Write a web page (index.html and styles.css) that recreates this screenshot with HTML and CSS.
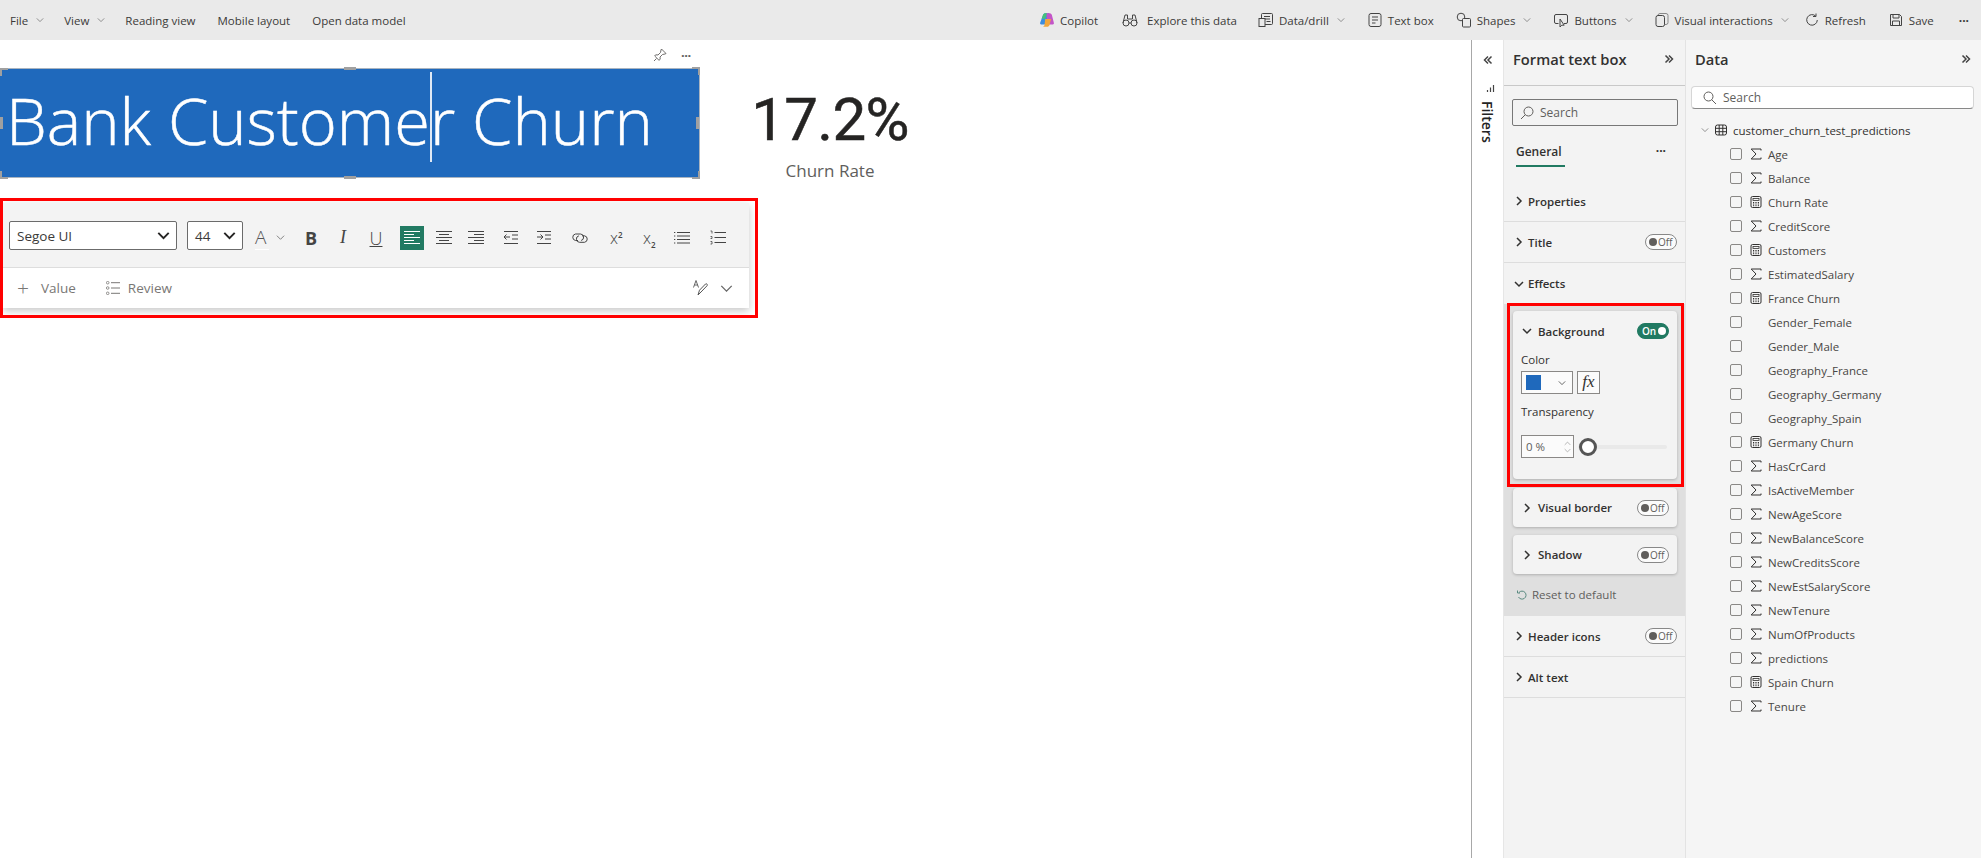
FILE: index.html
```html
<!DOCTYPE html>
<html lang="en">
<head>
<meta charset="utf-8">
<title>Bank Customer Churn</title>
<link rel="stylesheet" href="styles.css">
</head>
<body>
<svg class="defs" aria-hidden="true">
  <symbol id="chev-d" viewBox="0 0 10 10"><path d="M1 3l4 4 4-4" fill="none" stroke="currentColor"/></symbol>
  <symbol id="chev-r" viewBox="0 0 10 10"><path d="M3 1l4 4-4 4" fill="none" stroke="currentColor" stroke-width="1.5"/></symbol>
  <symbol id="chev-dd" viewBox="0 0 10 10"><path d="M1 3l4 4 4-4" fill="none" stroke="currentColor" stroke-width="1.5"/></symbol>
  <symbol id="dbl-r" viewBox="0 0 10 10"><path d="M1.5 1.5L5 5 1.5 8.500M5 1.500L8.500 5 5 8.500" fill="none" stroke="currentColor" stroke-width="1.500"/></symbol>
  <symbol id="dbl-l" viewBox="0 0 10 10"><path d="M8.500 1.500L5 5l3.500 3.500M5 1.500L1.500 5 5 8.500" fill="none" stroke="currentColor" stroke-width="1.500"/></symbol>
  <symbol id="sigma" viewBox="0 0 12 12"><path d="M11 2.500V1H1.200L6 6l-4.800 5H11V9.500" fill="none" stroke="currentColor"/></symbol>
  <symbol id="calc" viewBox="0 0 12 12"><rect x="1" y=".5" width="10" height="11" rx="1.500" fill="none" stroke="currentColor"/><rect x="3" y="2.500" width="6" height="2" fill="none" stroke="currentColor" stroke-width=".8"/><path d="M3 6.500h1.200M5.400 6.500h1.200M7.800 6.500H9M3 8h1.200M5.400 8h1.200M7.800 8H9M3 9.700h1.200M5.400 9.700h1.200M7.800 9.700H9" stroke="currentColor"/></symbol>
  <symbol id="table" viewBox="0 0 12 12"><rect x=".5" y="1" width="11" height="10" rx="2" fill="none" stroke="currentColor"/><path d="M.5 4.300h11M.5 7.700h11M4.200 1v10M7.800 1v10" stroke="currentColor"/></symbol>
  <symbol id="search" viewBox="0 0 14 14"><circle cx="8.500" cy="5.500" r="4.500" fill="none" stroke="currentColor"/><path d="M5.300 8.700L1 13" stroke="currentColor"/></symbol>
  <symbol id="search2" viewBox="0 0 14 14"><circle cx="5.500" cy="5.500" r="4.500" fill="none" stroke="currentColor"/><path d="M8.700 8.700L13 13" stroke="currentColor"/></symbol>
  <symbol id="reset" viewBox="0 0 12 12"><path d="M3 3.500A4 4 0 1 1 2.500 8" fill="none" stroke="#5a8a80"/><path d="M1.500 1.500v2.500H4" fill="none" stroke="#5a8a80"/></symbol>
  <symbol id="binoc" viewBox="0 0 16 16"><circle cx="4" cy="11" r="3" fill="none" stroke="currentColor"/><circle cx="12" cy="11" r="3" fill="none" stroke="currentColor"/><path d="M1 11l2-8h2.500v4M15 11l-2-8h-2.500v4M5.500 7h5M7 11h2" fill="none" stroke="currentColor"/></symbol>
  <symbol id="drill" viewBox="0 0 16 16"><rect x="3.500" y="1.500" width="11" height="11" rx="1" fill="none" stroke="currentColor"/><path d="M6 4.500h6M6 7h6M8.500 9.500h4" stroke="currentColor"/><rect x="1" y="6.500" width="6" height="8" fill="#eaeaea" stroke="currentColor"/></symbol>
  <symbol id="textbox" viewBox="0 0 16 16"><rect x="2" y="1.500" width="12" height="13" rx="2" fill="none" stroke="currentColor"/><path d="M5 5h6M5 8h6M5 11h3.500" stroke="currentColor"/></symbol>
  <symbol id="shapes" viewBox="0 0 16 16"><circle cx="5" cy="5" r="3.800" fill="none" stroke="currentColor"/><rect x="6.500" y="6.500" width="8" height="8.500" rx="1" fill="#eaeaea" stroke="currentColor"/></symbol>
  <symbol id="buttons" viewBox="0 0 16 16"><path d="M5.500 11.500H3a1.500 1.500 0 0 1-1.500-1.500V4A1.500 1.500 0 0 1 3 2.500h10A1.500 1.500 0 0 1 14.500 4v6a1.500 1.500 0 0 1-1.500 1.500h-2" fill="none" stroke="currentColor"/><path d="M7 7v8l1.800-1.800h2.400z" fill="#eaeaea" stroke="currentColor"/></symbol>
  <symbol id="interact" viewBox="0 0 16 16"><rect x="4" y="1.500" width="10" height="11" rx="2" fill="none" stroke="#888"/><rect x="2" y="3.500" width="8.500" height="11" rx="2" fill="#eaeaea" stroke="currentColor"/></symbol>
  <symbol id="refresh" viewBox="0 0 16 16"><path d="M11.800 4.200A5.300 5.300 0 1 0 13.300 8" fill="none" stroke="currentColor"/><path d="M12 1.500v3H9" fill="none" stroke="currentColor"/></symbol>
  <symbol id="save" viewBox="0 0 16 16"><path d="M2.500 2.500h9l2 2v9h-11z" fill="none" stroke="currentColor"/><path d="M5 2.500V6h6V2.500M4.500 13.500V9h7v4.500" fill="none" stroke="currentColor"/></symbol>
  <symbol id="pin" viewBox="0 0 14 14"><path d="M8.500 1L13 5.500l-1 .5-2.500.5L7 9l.2 2.300L6 12.300 1.700 8l1-1.200L5 7l2.500-2.500L8 2z" fill="none" stroke="currentColor" stroke-width=".9"/><path d="M3.500 10.500L1 13" stroke="currentColor" stroke-width=".9"/></symbol>
  <symbol id="a-l" viewBox="0 0 16 16"><path d="M0 1.500h16M0 4.500h10M0 7.500h16M0 10.500h10M0 13.500h16" stroke="currentColor"/></symbol>
  <symbol id="a-c" viewBox="0 0 16 16"><path d="M0 1.500h16M3 4.500h10M0 7.500h16M3 10.500h10M0 13.500h16" stroke="currentColor"/></symbol>
  <symbol id="a-r" viewBox="0 0 16 16"><path d="M0 1.500h16M6 4.500h10M0 7.500h16M6 10.500h10M0 13.500h16" stroke="currentColor"/></symbol>
  <symbol id="outdent" viewBox="0 0 16 16"><path d="M1 1.500h14M9 5h6M9 9h6M1 13.500h14M1 7h6M3.500 4.500L1 7l2.500 2.500" fill="none" stroke="currentColor"/></symbol>
  <symbol id="indent" viewBox="0 0 16 16"><path d="M1 1.500h14M9 5h6M9 9h6M1 13.500h14M1 7h6M4.500 4.500L7 7 4.500 9.500" fill="none" stroke="currentColor"/></symbol>
  <symbol id="link" viewBox="0 0 18 14"><path d="M7 9.500H4.500a3.300 3.300 0 0 1 0-6.500h5a3.300 3.300 0 0 1 .6 6.500" fill="none" stroke="currentColor"/><path d="M11 4.800h2.500a3.300 3.300 0 0 1 0 6.500h-5a3.300 3.300 0 0 1-.6-6.500" fill="none" stroke="currentColor"/></symbol>
  <symbol id="bullets" viewBox="0 0 16 16"><path d="M3 2.500h13M3 6h13M3 9.500h13M3 13h13" stroke="currentColor"/><path d="M0 2.500h1.300M0 6h1.300M0 9.500h1.300M0 13h1.300" stroke="currentColor"/></symbol>
  <symbol id="numbers" viewBox="0 0 16 16"><path d="M4.500 2.500H16M4.500 7.500H16M4.500 12.500H16" stroke="currentColor"/><path d="M.5 1h1.500v2.500M.5 6.500h1.500v2h-1.500M.5 11.500h1.500v2.500h-1.500" fill="none" stroke="currentColor" stroke-width=".8"/></symbol>
  <symbol id="review" viewBox="0 0 14 14"><circle cx="1.700" cy="1.700" r="1.300" fill="none" stroke="currentColor" stroke-width=".8"/><circle cx="1.700" cy="7" r="1.300" fill="none" stroke="currentColor" stroke-width=".8"/><circle cx="1.700" cy="12.300" r="1.300" fill="none" stroke="currentColor" stroke-width=".8"/><path d="M5 1.700h9M5 7h9M5 12.300h9" stroke="currentColor"/></symbol>
  <symbol id="pen" viewBox="0 0 16 18"><path d="M6 16.500l1.500-4.800 6-6.200c1-.9 2.500.7 1.600 1.700L9 13.500z" fill="none" stroke="currentColor" transform="translate(-1 -.5)"/><path d="M.5 8.500L3 1.500l2.500 7M1.400 6h3.200" fill="none" stroke="currentColor" stroke-width=".9"/></symbol>
  <symbol id="copilot" viewBox="0 0 18 18"><path d="M4.500 3.500C5 2 6 1.500 7.500 1.500h4L8 12c-.5 1.500-1.500 2-3 2H2.500C1.500 14 1 13 1.300 12z" fill="#3c8de0"/><path d="M8 1.500h3.500C13 1.500 14 2 14.500 3.500L16.700 12c.3 1-.2 2-1.200 2H10z" fill="#c355c8"/><path d="M7 8h6.500L11.800 14.500c-.4 1.300-1.300 2-2.800 2H3.500C5 16.500 5.800 15.800 6.200 14.500z" fill="#f2a73b"/><path d="M4.500 3.500C5 2 6 1.500 7.500 1.500H9L7 7.500H3z" fill="#45c27a"/></symbol>
</svg>

<header class="ribbon">
  <nav class="ribbon-left">
    <span class="rb rb-menu">File <svg class="ic-chev"><use href="#chev-d"/></svg></span>
    <span class="rb rb-menu">View <svg class="ic-chev"><use href="#chev-d"/></svg></span>
    <span class="rb">Reading view</span>
    <span class="rb">Mobile layout</span>
    <span class="rb">Open data model</span>
  </nav>
  <nav class="ribbon-right">
    <span class="rb"><svg class="ic-rb"><use href="#copilot"/></svg>Copilot</span>
    <span class="rb rb-explore"><svg class="ic-rb"><use href="#binoc"/></svg>Explore this data</span>
    <span class="rb"><svg class="ic-rb"><use href="#drill"/></svg>Data/drill<svg class="ic-chev"><use href="#chev-d"/></svg></span>
    <span class="rb"><svg class="ic-rb"><use href="#textbox"/></svg>Text box</span>
    <span class="rb"><svg class="ic-rb"><use href="#shapes"/></svg>Shapes<svg class="ic-chev"><use href="#chev-d"/></svg></span>
    <span class="rb"><svg class="ic-rb"><use href="#buttons"/></svg>Buttons<svg class="ic-chev"><use href="#chev-d"/></svg></span>
    <span class="rb rb-visual"><svg class="ic-rb"><use href="#interact"/></svg>Visual interactions<svg class="ic-chev"><use href="#chev-d"/></svg></span>
    <span class="rb"><svg class="ic-rb"><use href="#refresh"/></svg>Refresh</span>
    <span class="rb rb-save"><svg class="ic-rb"><use href="#save"/></svg>Save</span>
    <span class="rb rb-more">···</span>
  </nav>
</header>

<main class="main">
  <section class="canvas">
    <div class="visual-tools">
      <svg class="ic-pin"><use href="#pin"/></svg>
      <span class="tool-more">···</span>
    </div>

    <div class="textbox">
      <span class="textbox-text">Bank Custome<span class="caret"></span>r Churn</span>
      <i class="h h-tl"></i><i class="h h-tm"></i><i class="h h-tr"></i>
      <i class="h h-ml"></i><i class="h h-mr"></i>
      <i class="h h-bl"></i><i class="h h-bm"></i><i class="h h-br"></i>
    </div>

    <div class="card-kpi">
      <div class="kpi-value">17.2%</div>
      <div class="kpi-label">Churn Rate</div>
    </div>

    <div class="editor">
      <div class="editor-top">
        <div class="select select-font">Segoe UI<svg class="ic-dd"><use href="#chev-dd"/></svg></div>
        <div class="select select-size">44<svg class="ic-dd"><use href="#chev-dd"/></svg></div>
        <span class="fmt-a">A</span><svg class="ic-chev fmt-a-chev"><use href="#chev-d"/></svg>
        <span class="fmt fmt-b">B</span>
        <span class="fmt fmt-i">I</span>
        <span class="fmt fmt-u">U</span>
        <span class="fmt-active"><svg class="ic-fmt"><use href="#a-l"/></svg></span>
        <svg class="ic-fmt m-c"><use href="#a-c"/></svg>
        <svg class="ic-fmt m-r"><use href="#a-r"/></svg>
        <svg class="ic-fmt m-o"><use href="#outdent"/></svg>
        <svg class="ic-fmt m-n"><use href="#indent"/></svg>
        <svg class="ic-link"><use href="#link"/></svg>
        <span class="fmt-x m-sup">x<sup>2</sup></span>
        <span class="fmt-x m-sub">x<sub>2</sub></span>
        <svg class="ic-fmt m-b"><use href="#bullets"/></svg>
        <svg class="ic-fmt m-num"><use href="#numbers"/></svg>
      </div>
      <div class="editor-bottom">
        <span class="ed-plus">+</span><span class="ed-label">Value</span>
        <svg class="ic-review"><use href="#review"/></svg><span class="ed-label">Review</span>
        <svg class="ic-pen"><use href="#pen"/></svg>
        <svg class="ic-edchev"><use href="#chev-d"/></svg>
      </div>
    </div>
    <div class="redbox redbox-editor"></div>
  </section>

  <aside class="filters">
    <svg class="ic-dbl"><use href="#dbl-l"/></svg>
    <svg class="ic-filter" viewBox="0 0 10 10"><path d="M1.500 6v2M4.500 3.500V8M7.500 1v7" stroke="#444" stroke-width="1.200"/></svg>
    <span class="filters-label">Filters</span>
  </aside>

  <aside class="format">
    <div class="pane-head">
      <h2 class="pane-title">Format text box</h2>
      <svg class="ic-dbl"><use href="#dbl-r"/></svg>
    </div>
    <div class="format-search"><svg class="ic-search"><use href="#search"/></svg>Search</div>
    <div class="tabs"><span class="tab">General</span><span class="tab-more">···</span></div>
    <div class="sec"><svg class="ic-sec"><use href="#chev-r"/></svg>Properties</div>
    <div class="sec"><svg class="ic-sec"><use href="#chev-r"/></svg>Title<span class="toggle"><i></i>Off</span></div>
    <div class="sec sec-plain"><svg class="ic-sec"><use href="#chev-dd"/></svg>Effects</div>
    <div class="group">
      <div class="gcard gcard-bg">
        <div class="gcard-head gcard-head-open"><svg class="ic-sec"><use href="#chev-dd"/></svg>Background<span class="toggle toggle-on">On<i></i></span></div>
        <div class="field-label">Color</div>
        <div class="color-row">
          <div class="color-pick"><span class="swatch"></span><svg class="ic-chev"><use href="#chev-d"/></svg></div>
          <div class="fx">fx</div>
        </div>
        <div class="field-label field-label-t">Transparency</div>
        <div class="slider-row">
          <div class="num">0 %<span class="spin"><svg class="ic-spin ic-up"><use href="#chev-d"/></svg><svg class="ic-spin"><use href="#chev-d"/></svg></span></div>
          <div class="slider"><span class="thumb"></span></div>
        </div>
      </div>
      <div class="gcard gcard-row"><svg class="ic-sec"><use href="#chev-r"/></svg>Visual border<span class="toggle"><i></i>Off</span></div>
      <div class="gcard gcard-row"><svg class="ic-sec"><use href="#chev-r"/></svg>Shadow<span class="toggle"><i></i>Off</span></div>
      <div class="reset"><svg class="ic-reset"><use href="#reset"/></svg>Reset to default</div>
    </div>
    <div class="sec"><svg class="ic-sec"><use href="#chev-r"/></svg>Header icons<span class="toggle"><i></i>Off</span></div>
    <div class="sec"><svg class="ic-sec"><use href="#chev-r"/></svg>Alt text</div>
    <div class="redbox redbox-bg"></div>
  </aside>

  <aside class="data">
    <div class="data-head">
      <h2 class="pane-title">Data</h2>
      <svg class="ic-dbl"><use href="#dbl-r"/></svg>
    </div>
    <div class="data-search"><svg class="ic-search2"><use href="#search2"/></svg>Search</div>
    <div class="tree-table"><svg class="ic-chev"><use href="#chev-d"/></svg><svg class="ic-field"><use href="#table"/></svg>customer_churn_test_predictions</div>
    <ul class="fields">
      <li class="field"><i class="cb"></i><svg class="ic-field"><use href="#sigma"/></svg>Age</li>
      <li class="field"><i class="cb"></i><svg class="ic-field"><use href="#sigma"/></svg>Balance</li>
      <li class="field"><i class="cb"></i><svg class="ic-field"><use href="#calc"/></svg>Churn Rate</li>
      <li class="field"><i class="cb"></i><svg class="ic-field"><use href="#sigma"/></svg>CreditScore</li>
      <li class="field"><i class="cb"></i><svg class="ic-field"><use href="#calc"/></svg>Customers</li>
      <li class="field"><i class="cb"></i><svg class="ic-field"><use href="#sigma"/></svg>EstimatedSalary</li>
      <li class="field"><i class="cb"></i><svg class="ic-field"><use href="#calc"/></svg>France Churn</li>
      <li class="field"><i class="cb"></i><span class="ic-none"></span>Gender_Female</li>
      <li class="field"><i class="cb"></i><span class="ic-none"></span>Gender_Male</li>
      <li class="field"><i class="cb"></i><span class="ic-none"></span>Geography_France</li>
      <li class="field"><i class="cb"></i><span class="ic-none"></span>Geography_Germany</li>
      <li class="field"><i class="cb"></i><span class="ic-none"></span>Geography_Spain</li>
      <li class="field"><i class="cb"></i><svg class="ic-field"><use href="#calc"/></svg>Germany Churn</li>
      <li class="field"><i class="cb"></i><svg class="ic-field"><use href="#sigma"/></svg>HasCrCard</li>
      <li class="field"><i class="cb"></i><svg class="ic-field"><use href="#sigma"/></svg>IsActiveMember</li>
      <li class="field"><i class="cb"></i><svg class="ic-field"><use href="#sigma"/></svg>NewAgeScore</li>
      <li class="field"><i class="cb"></i><svg class="ic-field"><use href="#sigma"/></svg>NewBalanceScore</li>
      <li class="field"><i class="cb"></i><svg class="ic-field"><use href="#sigma"/></svg>NewCreditsScore</li>
      <li class="field"><i class="cb"></i><svg class="ic-field"><use href="#sigma"/></svg>NewEstSalaryScore</li>
      <li class="field"><i class="cb"></i><svg class="ic-field"><use href="#sigma"/></svg>NewTenure</li>
      <li class="field"><i class="cb"></i><svg class="ic-field"><use href="#sigma"/></svg>NumOfProducts</li>
      <li class="field"><i class="cb"></i><svg class="ic-field"><use href="#sigma"/></svg>predictions</li>
      <li class="field"><i class="cb"></i><svg class="ic-field"><use href="#calc"/></svg>Spain Churn</li>
      <li class="field"><i class="cb"></i><svg class="ic-field"><use href="#sigma"/></svg>Tenure</li>
    </ul>
  </aside>
</main>
</body>
</html>
```
FILE: styles.css
```css
* { box-sizing: border-box; }
html, body { margin: 0; height: 100%; }
body {
  width: 1981px; height: 858px; overflow: hidden;
  display: flex; flex-direction: column;
  font-family: "Open Sans", "Noto Sans", sans-serif;
  font-size: 11.5px; color: #323130; background: #fff;
}
.defs { width: 0; height: 0; position: absolute; }
svg { display: block; flex: none; }

/* ribbon */
.ribbon { height: 40px; flex: none; background: #eaeaea; display: flex; align-items: center; justify-content: space-between; padding: 0 12px 0 10px; }
.ribbon-left, .ribbon-right { display: flex; align-items: center; }
.ribbon-left { gap: 22px; }
.ribbon-right { gap: 22px; }
.rb { display: flex; align-items: center; gap: 5px; white-space: nowrap; color: #3b3a39; }
.rb-menu { gap: 5px; margin-right: -2px; }
.rb-explore { margin-left: 2px; gap: 9px; margin-right: -1px; }
.rb-visual { margin-left: -1px; margin-right: -7px; }
.rb-save { margin-right: 3px; }
.rb-more { font-weight: 700; letter-spacing: 0; font-size: 12px; }
.ic-chev { width: 8px; height: 8px; color: #777; }
.rb .ic-chev { margin-left: 3px; }
.ic-rb { width: 16px; height: 16px; color: #444; }

/* canvas */
.main { flex: 1; display: flex; min-height: 0; }
.canvas { flex: 1; position: relative; background: #fff; border-right: 1px solid #a8a8a8; }
.visual-tools { position: absolute; left: 653px; top: 8px; display: flex; align-items: center; gap: 14px; color: #605e5c; }
.ic-pin { width: 14px; height: 14px; }
.tool-more { font-size: 13px; font-weight: 700; line-height: 14px; letter-spacing: -.5px; }
.textbox {
  position: absolute; left: 0; top: 28px; width: 700px; height: 110px;
  background: #1f69bc; border: 1px solid #a9b4c0; border-left: 0;
  color: #fff; font-weight: 350; font-size: 65px; line-height: 102px; padding-left: 6px; white-space: nowrap;
  -webkit-text-stroke: .5px #fff;
}
.caret { position: relative; display: inline-block; width: 0; height: 0; }
.caret::after { content: ""; position: absolute; left: 0; bottom: -17px; width: 2px; height: 90px; background: #dfe9f5; }
.h { position: absolute; background: #a0a0a0; display: block; }
.h-tm, .h-bm { left: 344px; width: 12px; height: 3px; }
.h-tm { top: -2px; } .h-bm { bottom: -2px; }
.h-ml, .h-mr { top: 48px; width: 3px; height: 12px; }
.h-ml { left: 0; } .h-mr { right: 0; }
.h-tl, .h-tr, .h-bl, .h-br { width: 8px; height: 8px; background: none; border: 0 solid #a0a0a0; }
.h-tl { left: 0; top: -1px; border-width: 2px 0 0 2px; }
.h-tr { right: -1px; top: -2px; border-width: 2px 2px 0 0; }
.h-bl { left: 0; bottom: -2px; border-width: 0 0 2px 2px; }
.h-br { right: -1px; bottom: -2px; border-width: 0 2px 2px 0; }

.card-kpi { position: absolute; left: 740px; top: 45px; width: 180px; text-align: center; }
.kpi-value { font-family: Roboto, sans-serif; font-weight: 400; font-size: 60px; line-height: 70px; color: #252423; letter-spacing: -.7px; -webkit-text-stroke: .5px #252423; }
.kpi-label { font-size: 17px; line-height: 24px; color: #605e5c; margin-top: 4px; }

.editor { position: absolute; left: 3px; top: 163px; width: 746px; height: 105px; background: #fff; box-shadow: 0 3px 8px rgba(0,0,0,.22); display: flex; flex-direction: column; }
.editor-top { height: 65px; background: #f3f3f3; border-bottom: 1px solid #ddd; display: flex; align-items: center; padding: 5px 0 0 6px; }
.select { height: 29px; margin-top: -4px; background: #fff; border: 1px solid #6b6b6b; border-radius: 2px; display: flex; align-items: center; justify-content: space-between; padding: 0 6px 0 7px; font-size: 13.500px; color: #3b3a39; }
.select-font { width: 168px; }
.select-size { width: 56px; margin-left: 10px; }
.ic-dd { width: 13px; height: 13px; color: #252423; }
.fmt-a { font-size: 19px; font-weight: 300; color: #555; margin-left: 12px; width: 14px; border-bottom: 1px solid #fff; line-height: 23px; }
.fmt-a-chev { margin-left: 7px; width: 9px; height: 9px; }
.fmt { font-size: 18px; width: 16px; text-align: center; color: #444; }
.fmt-b { font-weight: 700; margin-left: 18px; }
.fmt-i { font-style: italic; margin-left: 16px; font-family: "Liberation Serif", serif; font-weight: 400; }
.fmt-u { text-decoration: underline; margin-left: 17px; font-weight: 300; }
.fmt-active { width: 24px; height: 24px; background: #217a62; color: #fff; margin-left: 16px; margin-top: 1px; display: flex; align-items: center; justify-content: center; }
.ic-fmt { width: 16px; height: 16px; color: #444; }
.fmt-active .ic-fmt { color: #fff; }
.m-c { margin-left: 12px; } .m-r { margin-left: 16px; } .m-o { margin-left: 19px; } .m-n { margin-left: 17px; }
.ic-link { width: 18px; height: 14px; color: #444; margin-left: 19px; }
.fmt-x { font-size: 16px; font-weight: 300; color: #444; width: 14px; line-height: 16px; }
.fmt-x sup, .fmt-x sub { font-size: 8px; line-height: 0; font-weight: 600; }
.m-sup { margin-left: 21px; } .m-sub { margin-left: 19px; }
.m-b { margin-left: 17px; } .m-num { margin-left: 20px; }
.editor-bottom { flex: 1; display: flex; align-items: center; padding: 0 16px 0 14px; color: #797775; font-size: 13.500px; }
.ed-plus { font-size: 21px; font-weight: 300; line-height: 20px; width: 14px; margin-right: 10px; }
.ed-label { color: #797775; }
.ic-review { width: 14px; height: 14px; color: #797775; margin-left: 30px; margin-right: 8px; }
.ic-pen { width: 16px; height: 18px; color: #555; margin-left: auto; }
.ic-edchev { width: 13px; height: 13px; color: #666; margin-left: 11px; }
.redbox { position: absolute; border: 3px solid #f00; pointer-events: none; z-index: 5; }
.redbox-editor { left: 0; top: 158px; width: 758px; height: 120px; }

/* filters rail */
.filters { width: 32px; flex: none; background: #fff; display: flex; flex-direction: column; align-items: center; padding-top: 15px; border-right: 1px solid #e6e6e6; }
.ic-dbl { width: 10px; height: 10px; color: #444; }
.ic-filter { width: 10px; height: 10px; margin-top: 19px; margin-left: 6px; }
.filters-label { writing-mode: vertical-rl; font-weight: 600; font-size: 14px; color: #252423; margin-top: 7px; }

/* format pane */
.format { width: 182px; flex: none; background: #f3f3f3; border-right: 1px solid #e3e3e3; position: relative; display: flex; flex-direction: column; }
.pane-head { height: 46px; border-bottom: 1px solid #c8c8c8; display: flex; align-items: center; justify-content: space-between; padding: 0 11px 8px 9px; flex: none; }
.pane-title { margin: 0; font-size: 14.700px; font-weight: 600; color: #323130; }
.format-search { margin: 13px 7px 0 8px; height: 27px; border: 1px solid #777; border-radius: 2px; display: flex; align-items: center; padding-left: 7px; gap: 6px; color: #605e5c; font-size: 12px; flex: none; }
.ic-search { width: 14px; height: 14px; color: #605e5c; }
.tabs { height: 55px; margin: 0 9px 0 12px; display: flex; justify-content: space-between; flex: none; padding-top: 18px; }
.tab { font-weight: 600; font-size: 12px; color: #323130; border-bottom: 2px solid #217a62; height: 23px; line-height: 15px; width: 49px; white-space: nowrap; }
.tab-more { font-weight: 700; font-size: 12px; line-height: 14px; margin-right: 10px; }
.sec { height: 41px; flex: none; border-bottom: 1px solid #ddd; display: flex; align-items: center; padding: 0 8px 0 11px; font-weight: 600; font-size: 11.500px; color: #323130; }
.sec-plain { border-bottom: 0; }
.ic-sec { width: 10px; height: 10px; margin-right: 4px; color: #323130; margin-left: -1px; }
.toggle { margin-left: auto; width: 32px; height: 16px; border: 1px solid #888; border-radius: 8px; display: flex; align-items: center; font-size: 10px; font-weight: 400; color: #605e5c; padding: 0 2px 0 3px; gap: 1px; line-height: 1; background: #fbfbfb; }
.toggle i { width: 8px; height: 8px; border-radius: 50%; background: #605e5c; display: block; flex: none; }
.toggle-on { background: #217a62; border-color: #217a62; color: #fff; font-weight: 600; justify-content: space-between; padding: 0 2px 0 4px; }
.toggle-on i { background: #fff; }
.group { background: #dfdfdf; padding: 7px 8px 0 9px; height: 312px; flex: none; display: flex; flex-direction: column; }
.gcard { background: #f3f3f3; border-radius: 4px; box-shadow: 0 1px 3px rgba(0,0,0,.22); font-weight: 600; }
.gcard-bg { height: 168px; padding: 12px 8px 0 8px; font-weight: 400; margin-bottom: 9px; }
.gcard-head { display: flex; align-items: center; height: 16px; font-weight: 600; padding-left: 2px; }
.gcard-head .ic-sec, .gcard-row .ic-sec { margin-right: 6px; }
.gcard-row { height: 39px; margin-bottom: 8px; display: flex; align-items: center; padding: 0 8px 0 10px; }
.field-label { margin-top: 13px; line-height: 16px; color: #323130; }
.color-row { display: flex; gap: 4px; margin-top: 3px; }
.color-pick { width: 52px; height: 23px; border: 1px solid #8a8886; display: flex; align-items: center; justify-content: space-between; padding: 0 6px 0 4px; background: #fbfbfb; }
.color-pick .ic-chev { color: #444; }
.swatch { width: 15px; height: 15px; background: #1f69bc; display: block; }
.fx { width: 23px; height: 23px; border: 1px solid #8a8886; background: #fbfbfb; font-family: "Liberation Serif", serif; font-style: italic; font-size: 17px; line-height: 20px; text-align: center; }
.field-label-t { margin-top: 10px; }
.slider-row { display: flex; align-items: center; margin-top: 15px; }
.num { width: 53px; height: 23px; border: 1px solid #8a8886; background: #fbfbfb; display: flex; align-items: center; justify-content: space-between; padding: 0 2px 0 4px; color: #605e5c; }
.spin { display: flex; flex-direction: column; }
.ic-spin { width: 7px; height: 7px; color: #999; }
.ic-up { transform: rotate(180deg); }
.slider { position: relative; height: 4px; width: 89px; margin-left: 4px; background: #e9e9e9; border-radius: 2px; }
.thumb { position: absolute; left: 1px; top: -7px; width: 18px; height: 18px; border-radius: 50%; background: #fff; border: 3px solid #555; }
.reset { display: flex; align-items: center; gap: 4px; height: 25px; color: #605e5c; padding-left: 3px; }
.ic-reset { width: 12px; height: 12px; }
.redbox-bg { left: 3px; top: 263px; width: 177px; height: 184px; }

/* data pane */
.data { width: 295px; flex: none; background: #f5f5f5; display: flex; flex-direction: column; }
.data-head { height: 46px; display: flex; align-items: center; justify-content: space-between; padding: 0 10px 8px 9px; flex: none; }
.data-search { margin: 0 7px 0 5px; height: 23px; background: #fff; border: 1px solid #d6d6d6; border-bottom-color: #888; border-radius: 4px; display: flex; align-items: center; gap: 6px; padding-left: 11px; color: #605e5c; font-size: 12px; flex: none; }
.ic-search2 { width: 14px; height: 14px; color: #605e5c; }
.tree-table { display: flex; align-items: center; height: 24px; margin-top: 9px; padding-left: 15px; color: #323130; white-space: nowrap; flex: none; }
.tree-table .ic-field { margin: 0 6px 0 6px; }
.fields { list-style: none; margin: 0; padding: 0; }
.field { height: 24px; display: flex; align-items: center; padding-left: 44px; color: #484644; white-space: nowrap; }
.cb { width: 12px; height: 12px; border: 1px solid #8a8886; border-radius: 2px; display: block; flex: none; margin-right: 8px; }
.ic-field { width: 12px; height: 12px; color: #323130; margin-right: 6px; }
.ic-none { width: 12px; margin-right: 6px; display: block; flex: none; }
```
